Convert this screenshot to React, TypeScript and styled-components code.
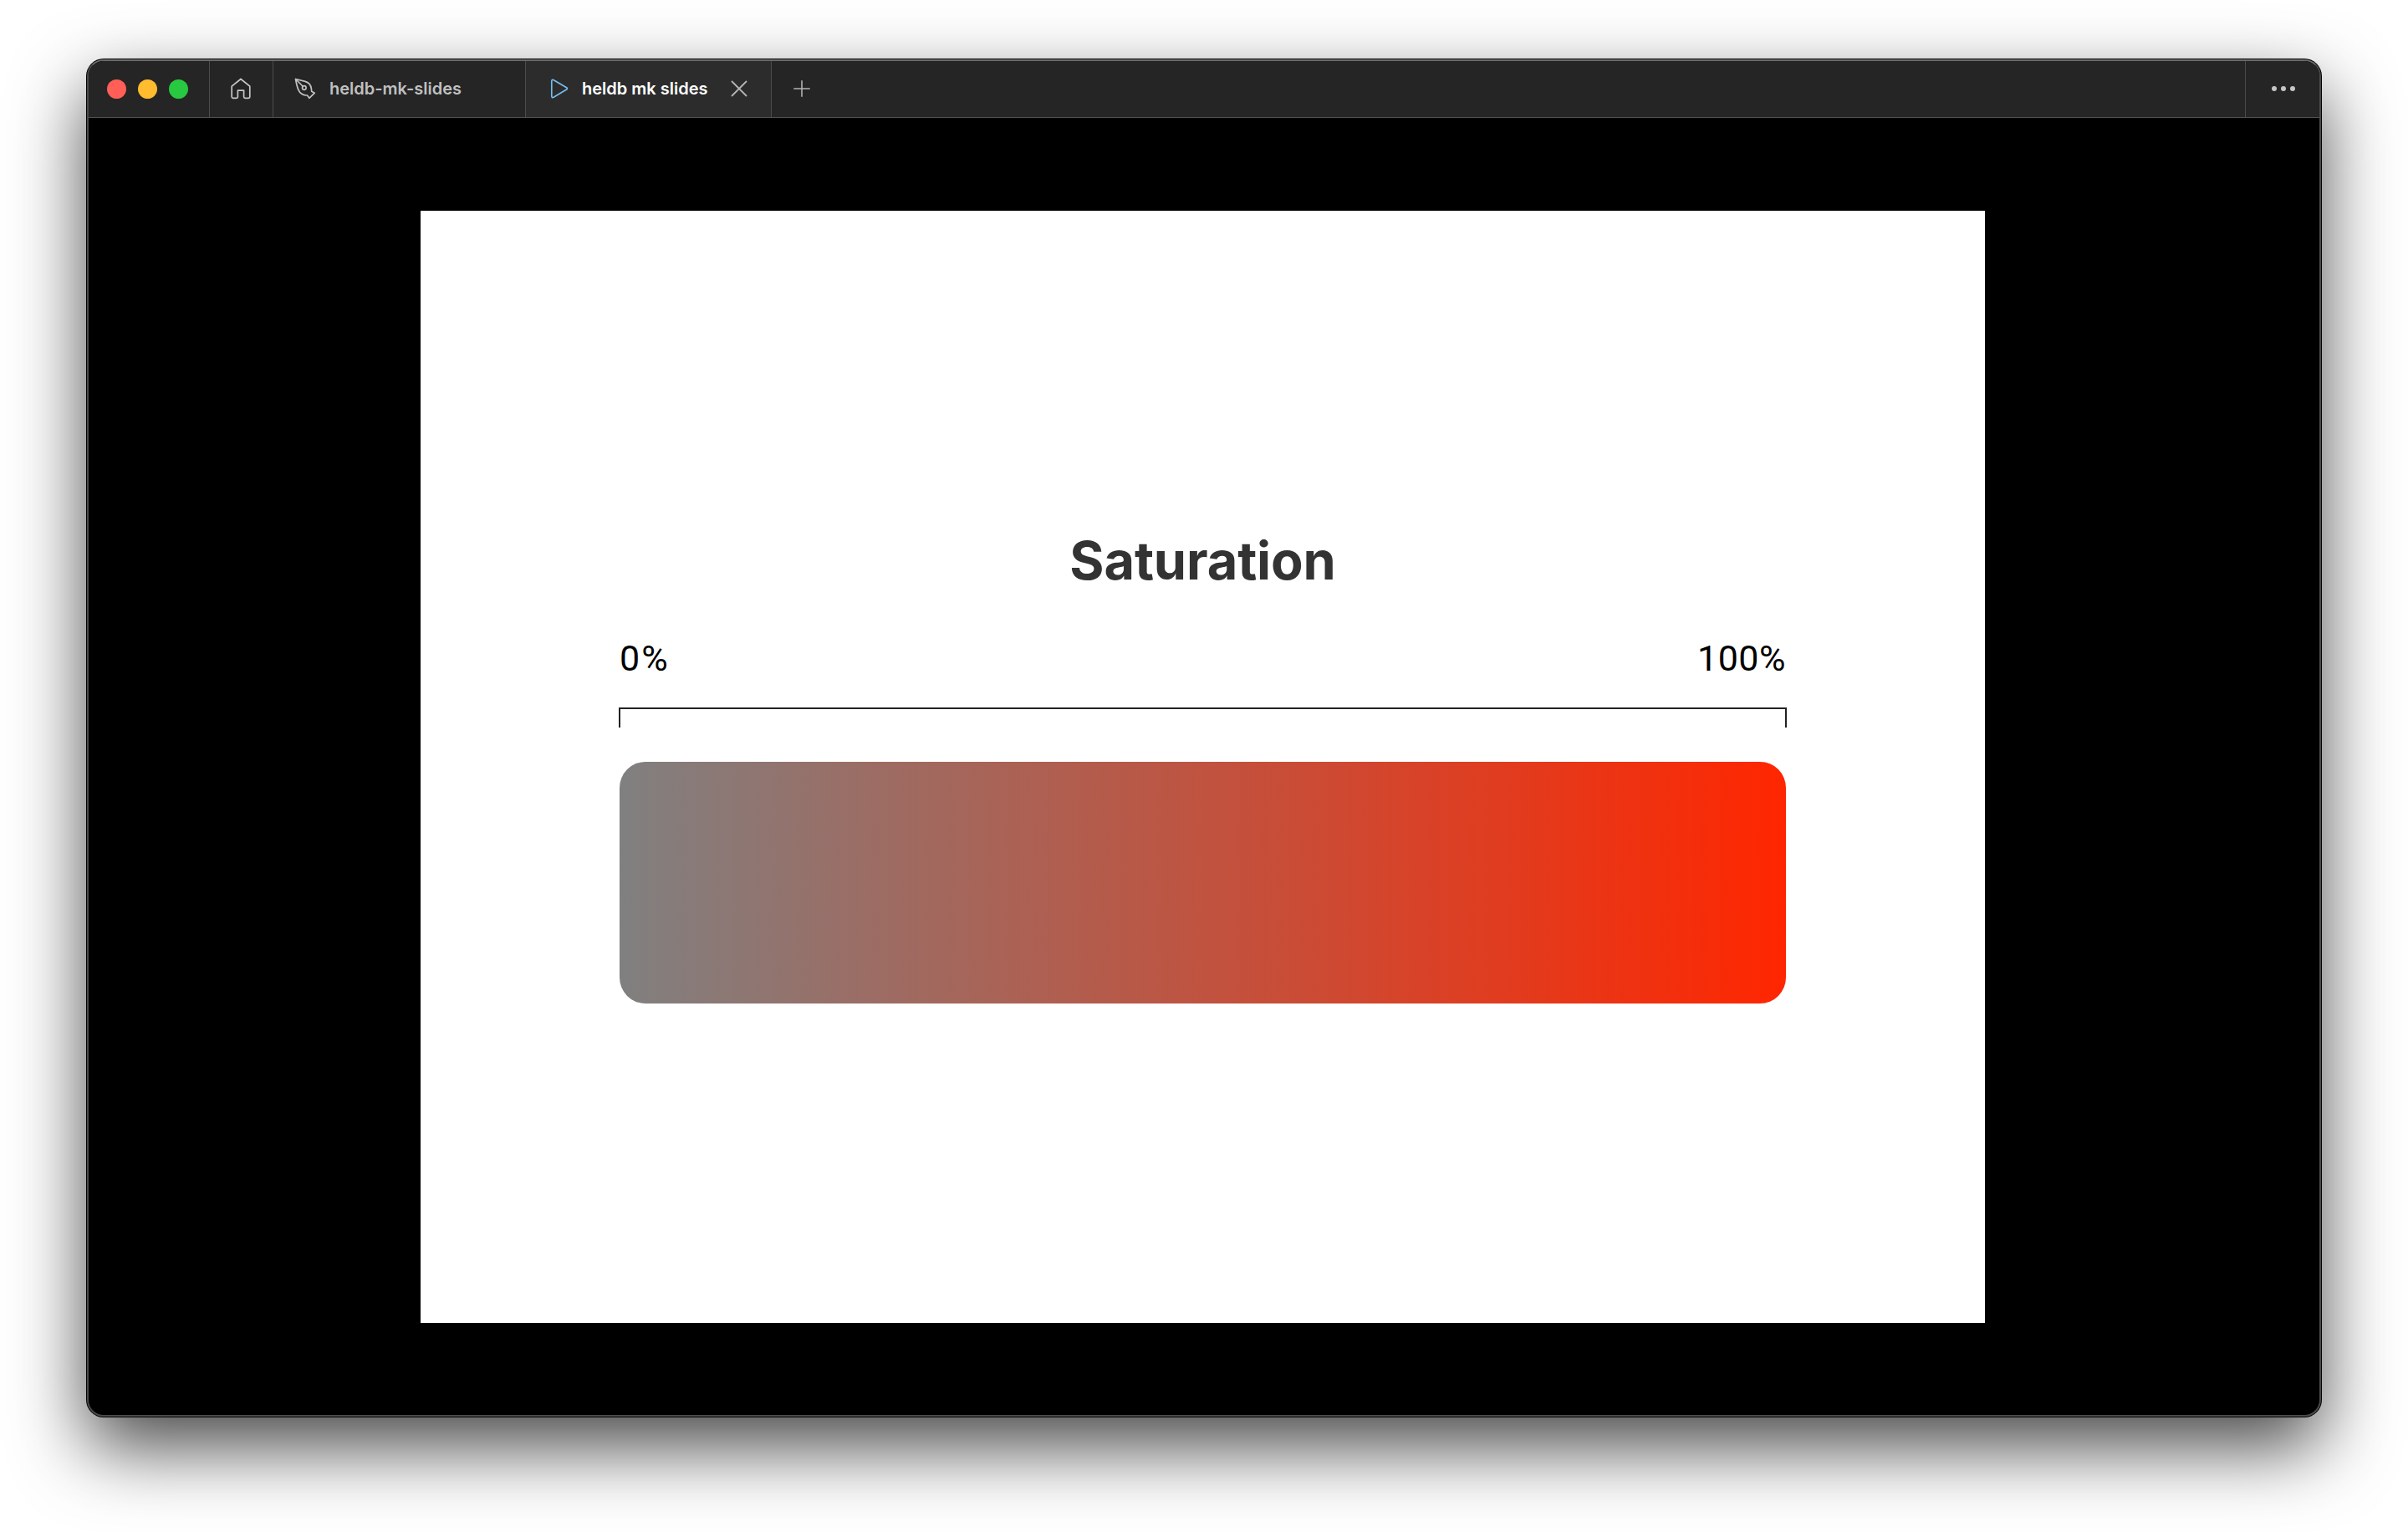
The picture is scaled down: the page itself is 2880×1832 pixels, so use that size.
import styled, { createGlobalStyle } from 'styled-components'

const GlobalStyle = createGlobalStyle`
    * {
        box-sizing: border-box;
    }
    body {
        margin: 0;
        background: #fff;
        overflow: hidden;
    }
`

const Desktop = styled.div`
    height: 1832px;
    padding: 71px 104px 138px;
    font-family: Inter, 'Liberation Sans', sans-serif;
`

const Window = styled.div`
    display: flex;
    flex-direction: column;
    height: 100%;
    overflow: hidden;
    border: 2px solid #4a4a4a;
    border-top-color: #6a6a6a;
    border-radius: 20px;
    background: #000;
    box-shadow:
        0 0 0 1px #000,
        0 36px 88px rgba(0, 0, 0, 0.72);
`

const TitleBar = styled.div`
    display: flex;
    height: 68px;
    border-bottom: 1px solid #525252;
    background: #252525;
`

const Lights = styled.div`
    display: flex;
    align-items: center;
    gap: 14px;
    width: 145px;
    padding: 0 0 1px 22px;
    border-right: 1px solid #4c4c4c;
`

const Light = styled.span<{ $color: string }>`
    width: 23px;
    height: 23px;
    border-radius: 50%;
    background: ${({ $color }) => $color};
`

const IconButton = styled.button<{ $width: number }>`
    display: flex;
    align-items: center;
    justify-content: center;
    width: ${({ $width }) => $width}px;
    padding: 0 1px 1px 0;
    border: none;
    background: transparent;
    color: #c6c6c6;

    &.home {
        border-right: 1px solid #4c4c4c;
    }
    &.more {
        margin-left: auto;
        padding: 0 0 1px 2px;
        border-left: 1px solid #4c4c4c;
    }
`

const Tab = styled.div<{ $width: number; $active?: boolean }>`
    display: flex;
    align-items: center;
    width: ${({ $width }) => $width}px;
    padding: 0 0 1px ${({ $active }) => ($active ? 29 : 25)}px;
    border-right: 1px solid #4c4c4c;
    background: ${({ $active }) => ($active ? '#2c2c2c' : 'transparent')};
    color: ${({ $active }) => ($active ? '#fff' : '#c0c0c0')};
    font-size: 20px;
    font-weight: 600;

    .label {
        margin-left: 16px;
        white-space: nowrap;
    }
    .close {
        margin-left: 27px;
        color: #b4b4b4;
    }
    svg {
        flex: none;
    }
`

const Stage = styled.div`
    display: flex;
    flex: 1;
    justify-content: center;
    padding: 111px 3px 0 0;
`

const Slide = styled.div`
    width: 1871px;
    height: 1330px;
    padding: 378px 237px 0;
    background: #fff;
`

const Title = styled.h1`
    margin: 0;
    color: #333;
    font-size: 63px;
    font-weight: 700;
    line-height: 80px;
    letter-spacing: -0.1px;
    text-align: center;
`

const Scale = styled.div`
    display: flex;
    justify-content: space-between;
    margin-top: 50px;
    padding: 0 1px;
    color: #000;
    font-family: Roboto, Inter, sans-serif;
    font-size: 43px;
    line-height: 54px;

    .min {
        letter-spacing: 2px;
    }
    .max {
        letter-spacing: 0.5px;
    }
`

const Bracket = styled.div`
    height: 24px;
    margin-top: 32px;
    border: 2px solid #222;
    border-bottom: none;
`

const SaturationBar = styled.div`
    height: 289px;
    margin: 41px 1px 0;
    border-radius: 31px;
    background: linear-gradient(90deg, #808080, #ff2600);
`

const HomeIcon = () => (
    <svg width="24" height="26" viewBox="0 0 24 26" fill="none" stroke="currentColor" strokeWidth="1.7" strokeLinejoin="round">
        <path d="M1.2 10.2 12 1.5l10.8 8.7v12.6q0 1.6-1.6 1.6h-4q-1.6 0-1.6-1.6v-7.6H8.4v7.6q0 1.6-1.6 1.6h-4q-1.6 0-1.6-1.6z" />
    </svg>
)

const PenIcon = () => (
    <svg width="26" height="26" viewBox="0 0 26 26" fill="none" stroke="currentColor" strokeWidth="1.7" strokeLinejoin="round" strokeLinecap="round">
        <path d="M1.5 1.5 13 4.4Q19.5 6.3 20.4 13.1l.3 3.1 3.6 2-6.4 6.1-2.4-3.3q-7.7.1-10.5-6.3Q3.2 10.9 1.5 1.5zM1.5 1.5l9 9" />
        <circle cx="11.8" cy="12" r="2.3" />
    </svg>
)

const PlayIcon = () => (
    <svg width="22" height="24" viewBox="0 0 22 24" fill="none" stroke="#75bdec" strokeWidth="1.7" strokeLinejoin="round">
        <path d="M1.8 3.1Q1.8.4 4.2 1.7l15.4 9.1q1.5 1.1 0 2.2L4.2 22.2q-2.4 1.2-2.4-1.4z" />
    </svg>
)

const CloseIcon = () => (
    <svg className="close" width="20" height="20" viewBox="0 0 20 20" stroke="currentColor" strokeWidth="1.8">
        <path d="m1 1 18 18M19 1 1 19" />
    </svg>
)

const PlusIcon = () => (
    <svg width="20" height="20" viewBox="0 0 20 20" stroke="#b4b4b4" strokeWidth="1.6">
        <path d="M10 .3v19.4M.3 10h19.4" />
    </svg>
)

const MoreIcon = () => (
    <svg width="28" height="6" viewBox="0 0 28 6" fill="currentColor">
        <circle cx="3" cy="3" r="3" />
        <circle cx="14" cy="3" r="3" />
        <circle cx="25" cy="3" r="3" />
    </svg>
)

const App = () => {
    return (
        <>
            <GlobalStyle />
            <Desktop>
                <Window>
                    <TitleBar>
                        <Lights>
                            <Light $color="#ff5f57" />
                            <Light $color="#febc2e" />
                            <Light $color="#28c840" />
                        </Lights>
                        <IconButton className="home" $width={76}>
                            <HomeIcon />
                        </IconButton>
                        <Tab $width={302}>
                            <PenIcon />
                            <span className="label">heldb-mk-slides</span>
                        </Tab>
                        <Tab $width={294} $active>
                            <PlayIcon />
                            <span className="label">heldb mk slides</span>
                            <CloseIcon />
                        </Tab>
                        <IconButton $width={72}>
                            <PlusIcon />
                        </IconButton>
                        <IconButton className="more" $width={89}>
                            <MoreIcon />
                        </IconButton>
                    </TitleBar>
                    <Stage>
                        <Slide>
                            <Title>Saturation</Title>
                            <Scale>
                                <span className="min">0%</span>
                                <span className="max">100%</span>
                            </Scale>
                            <Bracket />
                            <SaturationBar />
                        </Slide>
                    </Stage>
                </Window>
            </Desktop>
        </>
    )
}

export default App
